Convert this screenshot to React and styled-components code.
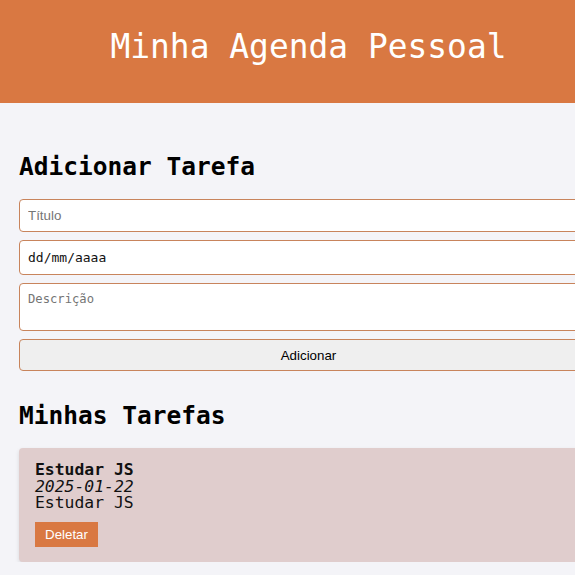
import React from 'react';
import styled, { createGlobalStyle } from 'styled-components';

const GlobalStyle = createGlobalStyle`
  html, body {
    margin: 0;
    padding: 0;
    overflow: hidden;
    background: #f4f4f8;
  }
  body {
    font-family: "DejaVu Sans Mono", monospace;
    color: #000;
  }
`;

const Page = styled.div`
  width: 617px;
`;

const Header = styled.header`
  background: #d97842;
  height: 103px;
  box-sizing: border-box;
  padding-top: 28px;
  text-align: center;
`;

const Title = styled.h1`
  margin: 0;
  color: #fff;
  font-size: 32.9px;
  font-weight: normal;
  line-height: 38px;
`;

const Main = styled.main`
  padding: 50px 19px 0;
`;

const Section = styled.section`
  margin-top: ${(p) => p.$gap || 0}px;
`;

const SectionTitle = styled.h2`
  margin: 0 0 18px;
  font-size: 24.5px;
  font-weight: bold;
  line-height: 28px;
  color: #000;
`;

const Form = styled.form`
  display: flex;
  flex-direction: column;
  gap: 8px;
`;

const fieldBase = `
  box-sizing: border-box;
  width: 100%;
  margin: 0;
  border: 1px solid #c8845c;
  border-radius: 4px;
  background: #fff;
  padding: 8px;
  outline: none;
`;

const TextInput = styled.input`
  ${fieldBase}
  height: ${(p) => p.$h || 33}px;
  font-family: ${(p) => (p.$mono ? '"DejaVu Sans Mono", monospace' : '"Liberation Sans", Arial, sans-serif')};
  font-size: ${(p) => (p.$mono ? '13px' : '13.33px')};
  color: #000;
  &::placeholder {
    color: ${(p) => (p.$darkPlaceholder ? '#111' : '#757575')};
    opacity: 1;
  }
`;

const TextArea = styled.textarea`
  ${fieldBase}
  height: 48px;
  resize: none;
  font-family: "DejaVu Sans Mono", monospace;
  font-size: 12.2px;
  line-height: 15px;
  &::placeholder {
    color: #757575;
    opacity: 1;
  }
`;

const SubmitButton = styled.button`
  box-sizing: border-box;
  width: 100%;
  height: 32px;
  margin: 0;
  border: 1px solid #c8845c;
  border-radius: 4px;
  background: #efefef;
  color: #000;
  font-family: "Liberation Sans", Arial, sans-serif;
  font-size: 13.33px;
  padding: 0;
  cursor: pointer;
`;

const TaskList = styled.ul`
  list-style: none;
  margin: 0;
  padding: 0;
  display: flex;
  flex-direction: column;
  gap: 12px;
`;

const TaskCard = styled.li`
  background: #e0cdcd;
  border-radius: 4px;
  padding: 14px 16px 15px;
  box-shadow: 0 2px 4px rgba(0, 0, 0, 0.12);
`;

const TaskLine = styled.div`
  font-size: 16.4px;
  line-height: 16.5px;
  color: #111;
  font-weight: ${(p) => (p.$bold ? 'bold' : 'normal')};
  font-style: ${(p) => (p.$italic ? 'italic' : 'normal')};
`;

const DeleteButton = styled.button`
  margin-top: 10px;
  display: inline-block;
  border: none;
  border-radius: 0;
  background: #d97842;
  color: #fff;
  font-family: "Liberation Sans", Arial, sans-serif;
  font-size: 13.33px;
  line-height: 15px;
  padding: 5px 10px;
  cursor: pointer;
`;

const tasks = [
  { id: 1, title: 'Estudar JS', date: '2025-01-22', description: 'Estudar JS' },
];

export default function App() {
  return (
    <>
      <GlobalStyle />
      <Page>
        <Header>
          <Title>Minha Agenda Pessoal</Title>
        </Header>
        <Main>
          <Section>
            <SectionTitle>Adicionar Tarefa</SectionTitle>
            <Form onSubmit={(e) => e.preventDefault()}>
              <TextInput type="text" placeholder="Título" />
              <TextInput type="text" placeholder="dd/mm/aaaa" $mono $darkPlaceholder $h={35} />
              <TextArea placeholder="Descrição" />
              <SubmitButton type="submit">Adicionar</SubmitButton>
            </Form>
          </Section>
          <Section $gap={31}>
            <SectionTitle>Minhas Tarefas</SectionTitle>
            <TaskList>
              {tasks.map((t) => (
                <TaskCard key={t.id}>
                  <TaskLine $bold>{t.title}</TaskLine>
                  <TaskLine $italic>{t.date}</TaskLine>
                  <TaskLine>{t.description}</TaskLine>
                  <DeleteButton type="button">Deletar</DeleteButton>
                </TaskCard>
              ))}
            </TaskList>
          </Section>
        </Main>
      </Page>
    </>
  );
}
